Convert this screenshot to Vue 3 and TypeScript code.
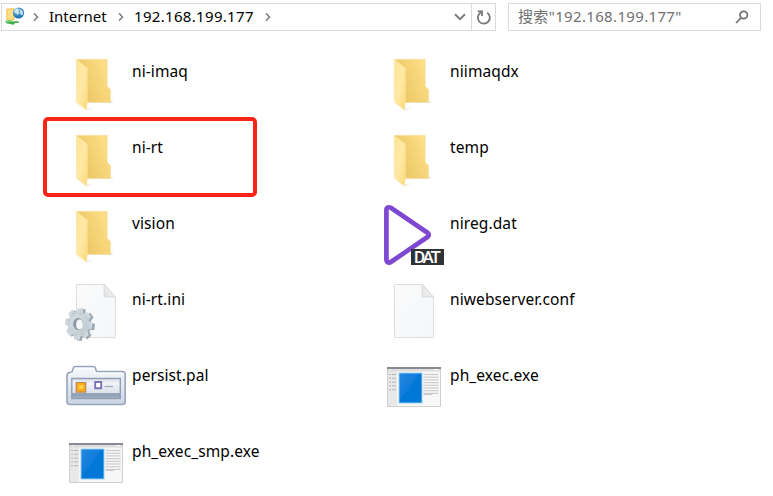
<script setup lang="ts">
type Kind = 'folder' | 'dat' | 'page' | 'ini' | 'pal' | 'exe'
interface Entry { name: string; kind: Kind; marked?: boolean }

const entries: Entry[] = [
  { name: 'ni-imaq', kind: 'folder' },
  { name: 'niimaqdx', kind: 'folder' },
  { name: 'ni-rt', kind: 'folder', marked: true },
  { name: 'temp', kind: 'folder' },
  { name: 'vision', kind: 'folder' },
  { name: 'nireg.dat', kind: 'dat' },
  { name: 'ni-rt.ini', kind: 'ini' },
  { name: 'niwebserver.conf', kind: 'page' },
  { name: 'persist.pal', kind: 'pal' },
  { name: 'ph_exec.exe', kind: 'exe' },
  { name: 'ph_exec_smp.exe', kind: 'exe' },
]
const teeth = [0, 45, 90, 135, 180, 225, 270, 315]
const lines = [0, 1, 2, 3, 4, 5, 6, 7]
</script>

<template>
  <main class="explorer">
    <svg class="defs" width="0" height="0" aria-hidden="true">
      <defs>
        <linearGradient id="back" x1="0" y1="0.7" x2="1" y2="0.2"><stop offset="0.2" stop-color="#edc967" /><stop offset="1" stop-color="#ffe08a" /></linearGradient>
        <linearGradient id="flap" x1="0" y1="0" x2="1" y2="1"><stop offset="0" stop-color="#ffe494" /><stop offset="0.5" stop-color="#ffe9a6" /><stop offset="1" stop-color="#fbd976" /></linearGradient>
        <linearGradient id="paper" x1="0" y1="0" x2="1" y2="1"><stop offset="0" stop-color="#fafafa" /><stop offset="1" stop-color="#f4f7fa" /></linearGradient>
        <linearGradient id="fold" x1="0" y1="1" x2="1" y2="0"><stop offset="0" stop-color="#e2e2e2" /><stop offset="1" stop-color="#fafafa" /></linearGradient>
        <linearGradient id="steel" x1="0" y1="0" x2="1" y2="1"><stop offset="0" stop-color="#d9e1e7" /><stop offset="1" stop-color="#bcc7cf" /></linearGradient>
        <linearGradient id="case" x1="0" y1="0" x2="0" y2="1"><stop offset="0" stop-color="#f7fafd" /><stop offset="1" stop-color="#cbd5e3" /></linearGradient>
        <linearGradient id="panel" x1="0" y1="0" x2="0" y2="1"><stop offset="0" stop-color="#d9dfe8" /><stop offset="0.25" stop-color="#f0f3f7" /><stop offset="0.7" stop-color="#dde2ea" /><stop offset="0.76" stop-color="#8b9bb2" /><stop offset="1" stop-color="#a4b0c2" /></linearGradient>
        <linearGradient id="blue" x1="0" y1="0" x2="1" y2="1"><stop offset="0" stop-color="#2488e0" /><stop offset="0.45" stop-color="#107cdc" /><stop offset="0.48" stop-color="#0078d7" /></linearGradient>
        <radialGradient id="globe" cx="0.35" cy="0.3"><stop offset="0" stop-color="#b9def3" /><stop offset="1" stop-color="#2678b9" /></radialGradient>
      </defs>
    </svg>

    <header class="bar">
      <nav class="address">
        <svg class="site" width="22" height="22" viewBox="0 0 22 22">
          <path d="M2.5 3.5 10 2v12l-7.5-1z" fill="#fbd870" /><path d="M3 3h7v11H3z" fill="#ffdf83" stroke="#efc254" stroke-width="1" />
          <circle cx="14.5" cy="7" r="5.6" fill="url(#globe)" />
          <path d="m10 5 3-2.5 2 1-1 2 1.5 1.5-2 2-1-2-2-.5zm6-2 3 2.5v3l-2 1-1-3z" fill="#d5eef0" opacity=".85" />
          <path d="m1 15 5-1 2.5 1.5 5-.5 2 2-4-.3L9 19l-2-1-4-.4z" fill="#3cae45" /><path d="m2 15 5-.4 1 1-5 .5z" fill="#94e295" />
        </svg>
        <svg class="chev first" width="8" height="10" viewBox="0 0 8 10"><path d="m2 1.3 3.5 3.7L2 8.7" /></svg>
        <span class="crumb internet">Internet</span>
        <svg class="chev second" width="8" height="10" viewBox="0 0 8 10"><path d="m2 1.3 3.5 3.7L2 8.7" /></svg>
        <span class="crumb host">192.168.199.177</span>
        <svg class="chev third" width="8" height="10" viewBox="0 0 8 10"><path d="m2 1.3 3.5 3.7L2 8.7" /></svg>
        <span class="grow"></span>
        <svg class="down" width="12" height="8" viewBox="0 0 12 8"><path d="m1 1.2 5 5 5-5" /></svg>
        <span class="reload">
          <svg width="18" height="18" viewBox="0 0 18 18"><path d="M12.2 4.7A6 6 0 1 1 5.8 4.5" /><path d="M2.8 3.4H7v4.5" /></svg>
        </span>
      </nav>
      <div class="search">
        <span>搜索"192.168.199.177"</span>
        <svg width="14" height="14" viewBox="0 0 14 14"><circle cx="8.7" cy="5" r="3.7" /><path d="M6 7.8 1 13" /></svg>
      </div>
    </header>

    <section class="files">
      <div v-for="e in entries" :key="e.name" class="file" :class="{ marked: e.marked }">
        <svg class="icon" width="64" height="64" viewBox="0 0 64 64">
          <g v-if="e.kind === 'folder'">
            <path d="m24 50 26-.7-3 1.7H24zM21 57.5l8-2-5 2.8z" fill="#d8d8d8" opacity=".6" />
            <path d="M12.5 7.4h30.6v26.8l3.3 3.3v12.8H22.5z" fill="url(#back)" stroke="#f6dc91" stroke-width=".8" />
            <path d="m12.4 7.4 11 8.6v33l-1 9-10-7.8z" fill="url(#flap)" stroke="#f9e1a0" stroke-width=".6" />
          </g>
          <g v-else-if="e.kind === 'dat'">
            <path d="M4.4 6.2C4.4 3.3 6.9 2.5 9.2 4L45.5 28.8C47.2 30 47.2 31.8 45.5 33L9.2 57.8C6.9 59.4 4.4 58.2 4.4 55.5z" fill="#fff" stroke="#7f48d2" stroke-width="4.7" />
            <path d="M29 45h33v16H29z" fill="#303336" />
            <text x="45.4" y="58.5" class="dat" text-anchor="middle" textLength="27">DAT</text>
          </g>
          <g v-else-if="e.kind === 'page' || e.kind === 'ini'">
            <path d="M12.5 4.5h28L51.5 17v40.5h-39z" fill="url(#paper)" stroke="#dedede" />
            <path d="M40.2 4.8v12h11z" fill="url(#fold)" stroke="#d5d5d5" stroke-width=".8" />
            <g v-if="e.kind === 'ini'">
              <g transform="translate(17 44.8) scale(.86 1)" fill="#9ba8b2">
                <circle r="12" /><path v-for="t in teeth" :key="t" d="m-3-16 6 0 1 6h-8z" :transform="`rotate(${t + 8})`" />
              </g>
              <g transform="translate(14.6 44) scale(.86 1)" fill="url(#steel)">
                <circle r="12.4" /><path v-for="t in teeth" :key="t" d="m-3-15.8 6 0 1.4 6h-8.8z" :transform="`rotate(${t + 8})`" />
              </g>
              <ellipse cx="14.1" cy="44" rx="5" ry="6" fill="#8d9aa5" /><ellipse cx="15.5" cy="44.4" rx="3.3" ry="4.8" fill="#f5f7f9" />
            </g>
          </g>
          <g v-else-if="e.kind === 'pal'">
            <path d="M3 20q0-3.2 3-3.6l2.3-.7.8-3.3q.4-1.9 2.2-1.9h17.8q2 0 2.5 1.9l.8 3.1h25.8q3 0 3 3v27q0 3-3 3H6q-3 0-3-3z" fill="url(#case)" stroke="#97a5bc" stroke-width="1.6" />
            <path d="M4.8 20q0-2 2-2.2l3.2-1 1-4h18.3l1.4 4.5h27q1.7 0 1.7 1.7" fill="none" stroke="#fff" stroke-width="1" />
            <path d="M7.8 22.5h48.5v20H7.8z" fill="url(#panel)" stroke="#919eb3" stroke-width="1.4" />
            <path d="M12.2 26.5h9.5v9.7h-9.5z" fill="#ffa817" stroke="#b98b5c" stroke-width="1.2" /><path d="M14.8 29h4.5v4h-4.5z" fill="#ffd34a" />
            <path d="M31.2 26h6v6.3h-6z" fill="#fff" stroke="#7a70b4" stroke-width="1.9" /><path d="M40.5 30.5H49" stroke="#a5afbc" stroke-width="1.3" />
          </g>
          <g v-else>
            <path d="M5.5 11.5h53v39h-53z" fill="#f7f7f7" stroke="#cfcfcf" /><path d="M6 15h9v35H6z" fill="#e8e8e8" />
            <path d="M5 11h54v2H5z" fill="#858b90" /><path d="M6 13h52v2.5H6z" fill="#ddd" /><path d="M8 13.5h1M52 13.5h4" stroke="#fff" />
            <path d="M16.6 16.6h23.8v30.8H16.6z" fill="#8bcaf4" /><path d="M17.5 17.5h22v29h-22z" fill="url(#blue)" />
            <path v-for="n in lines" :key="n" :d="`M41.5 ${18.5 + n * 2.7}h15`" stroke="#c9c9c9" stroke-width="1.1" />
            <path d="M41.5 38.5H50" stroke="#c9c9c9" />
            <path v-for="n in lines.slice(0, 5)" :key="'s' + n" :d="`M7 ${18.5 + n * 3.8}h2m1 0h4`" stroke="#b4b4b4" />
          </g>
        </svg>
        <span class="name">{{ e.name }}</span>
      </div>
    </section>
  </main>
</template>

<style>
body { background: #fff; overflow: hidden; }
</style>

<style scoped>
.explorer { width: 773px; height: 496px; box-sizing: border-box; padding-top: 3px; background: #fff; color: #000; font-family: "Noto Sans", "Noto Sans CJK SC", sans-serif; font-size: 15px; overflow: hidden; }
.defs { display: block; }
svg { display: block; flex: none; }
.bar { display: flex; height: 28px; gap: 12px; padding-left: 1px; }
.address, .search { box-sizing: border-box; border: 1px solid #d9d9d9; display: flex; align-items: center; }
.address { width: 495px; }
.site { margin-left: 2px; }
.chev, .down { fill: none; stroke: #7b7b7b; stroke-width: 1.5; }
.first { margin-left: 6px; }
.crumb { line-height: 24px; padding-bottom: 2px; white-space: nowrap; }
.internet { margin-left: 9px; width: 58px; }
.second { margin-left: 10px; }
.host { margin-left: 9px; width: 120px; letter-spacing: .32px; }
.third { margin-left: 10px; }
.grow { flex: 1; }
.down { margin-right: 5px; stroke-width: 2; }
.reload { display: flex; align-items: center; justify-content: center; width: 23px; height: 26px; border-left: 1px solid #d9d9d9; fill: none; stroke: #757575; stroke-width: 1.8; }
.search { width: 253px; justify-content: space-between; padding: 0 11px 0 9px; color: #707070; }
.search span { line-height: 24px; padding-bottom: 2px; letter-spacing: .34px; }
.search svg { fill: none; stroke: #757575; stroke-width: 1.8; }
.files { display: grid; grid-template-columns: 318px 318px; grid-auto-rows: 76px; padding: 21px 0 0 64px; }
.file { position: relative; display: flex; gap: 4px; }
.name { line-height: 20px; padding-top: 9px; white-space: nowrap; font-size: 15.5px; letter-spacing: .1px; }
.marked::after { content: ""; position: absolute; left: -21px; top: -11px; width: 206px; height: 72px; border: 4px solid #fb2417; border-radius: 5px; }
.dat { font: 500 17px "Roboto", sans-serif; fill: #fff; }
</style>
